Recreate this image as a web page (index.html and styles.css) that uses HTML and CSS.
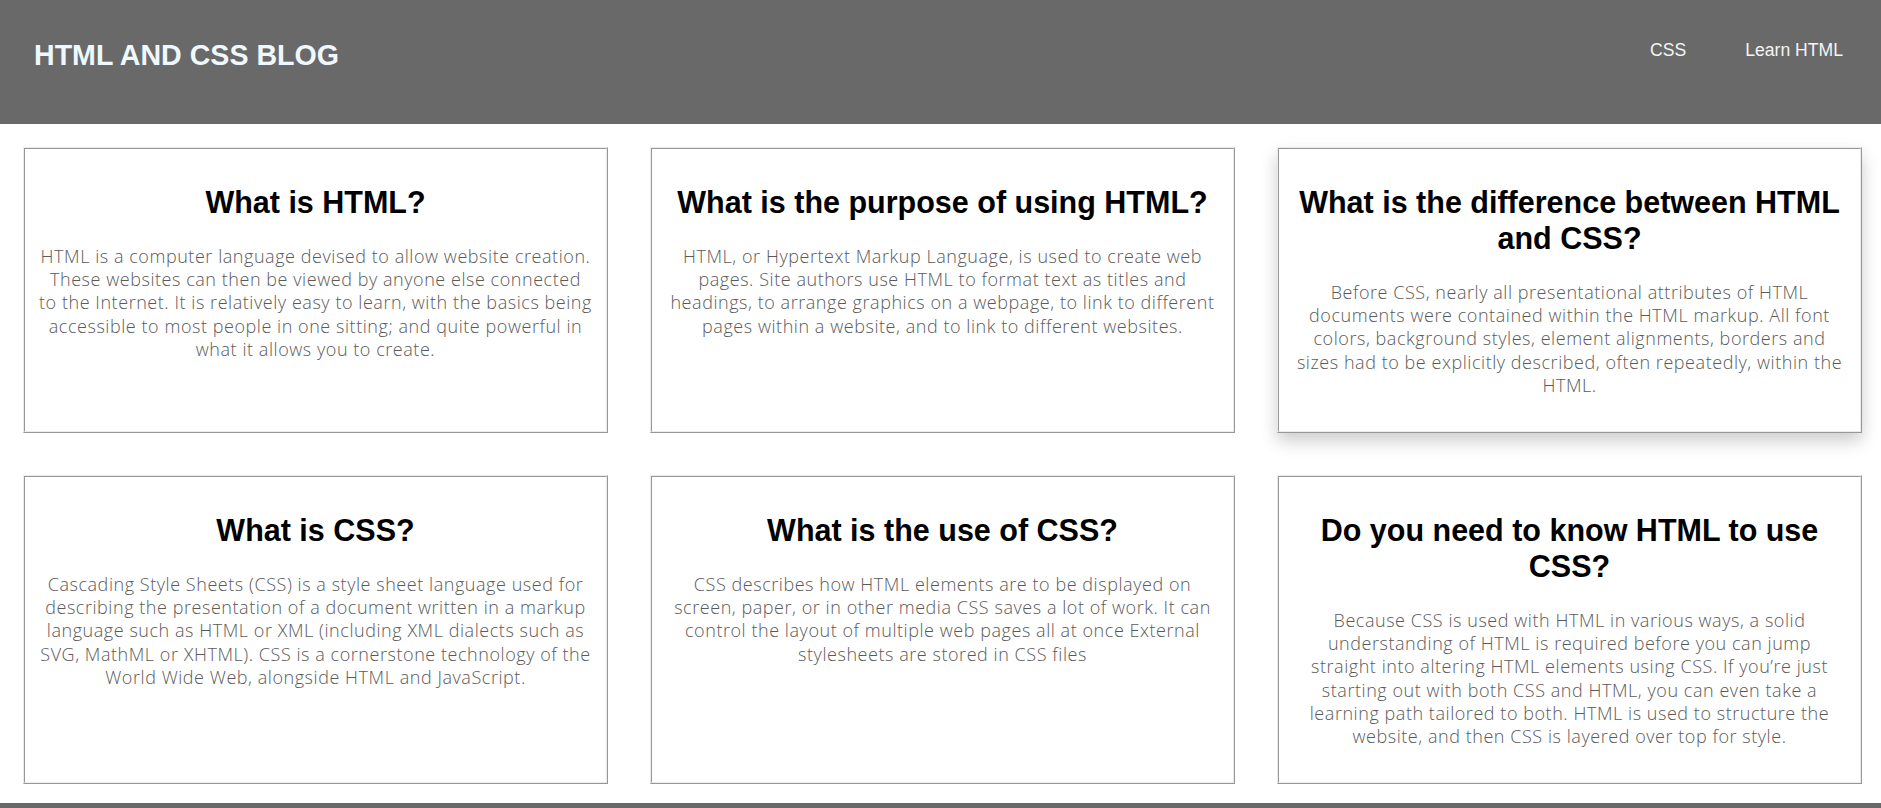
FILE: index.html
```html
<!DOCTYPE html>
<html lang="en">
<head>
<meta charset="utf-8">
<title>HTML and CSS Blog</title>
<link rel="stylesheet" href="styles.css">
</head>
<body>
<header class="site-header">
  <h1 class="brand">HTML AND CSS BLOG</h1>
  <nav class="nav">
    <a class="nav-link" href="#">CSS</a>
    <a class="nav-link" href="#">Learn HTML</a>
  </nav>
</header>
<main class="grid">
  <article class="card">
    <h2 class="card-title">What is HTML?</h2>
    <p class="card-text">HTML is a computer language devised to allow website creation.<br>These websites can then be viewed by anyone else connected<br>to the Internet. It is relatively easy to learn, with the basics being<br>accessible to most people in one sitting; and quite powerful in<br>what it allows you to create.</p>
  </article>
  <article class="card">
    <h2 class="card-title">What is the purpose of using HTML?</h2>
    <p class="card-text">HTML, or Hypertext Markup Language, is used to create web<br>pages. Site authors use HTML to format text as titles and<br>headings, to arrange graphics on a webpage, to link to different<br>pages within a website, and to link to different websites.</p>
  </article>
  <article class="card card-hover">
    <h2 class="card-title">What is the difference between HTML and CSS?</h2>
    <p class="card-text">Before CSS, nearly all presentational attributes of HTML<br>documents were contained within the HTML markup. All font<br>colors, background styles, element alignments, borders and<br>sizes had to be explicitly described, often repeatedly, within the<br>HTML.</p>
  </article>
  <article class="card">
    <h2 class="card-title">What is CSS?</h2>
    <p class="card-text">Cascading Style Sheets (CSS) is a style sheet language used for<br>describing the presentation of a document written in a markup<br>language such as HTML or XML (including XML dialects such as<br>SVG, MathML or XHTML). CSS is a cornerstone technology of the<br>World Wide Web, alongside HTML and JavaScript.</p>
  </article>
  <article class="card">
    <h2 class="card-title">What is the use of CSS?</h2>
    <p class="card-text">CSS describes how HTML elements are to be displayed on<br>screen, paper, or in other media CSS saves a lot of work. It can<br>control the layout of multiple web pages all at once External<br>stylesheets are stored in CSS files</p>
  </article>
  <article class="card">
    <h2 class="card-title">Do you need to know HTML to use CSS?</h2>
    <p class="card-text">Because CSS is used with HTML in various ways, a solid<br>understanding of HTML is required before you can jump<br>straight into altering HTML elements using CSS. If you’re just<br>starting out with both CSS and HTML, you can even take a<br>learning path tailored to both. HTML is used to structure the<br>website, and then CSS is layered over top for style.</p>
  </article>
</main>
<footer class="site-footer"></footer>
</body>
</html>
```

FILE: styles.css
```css
html, body {
  margin: 0;
  padding: 0;
  background: #ffffff;
}

body {
  font-family: "Liberation Sans", Arial, sans-serif;
}

.site-header {
  box-sizing: border-box;
  height: 124px;
  background: #696969;
  display: flex;
  justify-content: space-between;
  align-items: flex-start;
  padding: 39px 38px 0 34px;
}

.brand {
  margin: 0;
  font-family: "Liberation Sans", Arial, sans-serif;
  font-weight: 700;
  font-size: 28.6px;
  line-height: 33px;
  color: #f0f8ff;
}

.nav {
  display: flex;
  gap: 59px;
  padding-top: 1px;
}

.nav-link {
  font-family: "Liberation Sans", Arial, sans-serif;
  font-size: 17.6px;
  line-height: 20px;
  color: #f4f4f4;
  text-decoration: none;
}

.grid {
  display: grid;
  grid-template-columns: repeat(3, 1fr);
  column-gap: 42px;
  row-gap: 42px;
  padding: 0 19px 0 23px;
  margin: 23px 0 19px;
}

.card {
  border: 2px ridge #ebebeb;
  background: #ffffff;
  padding: 35px 5px 34px;
  text-align: center;
}

.card-hover {
  box-shadow: 0 8px 16px 0 rgba(0, 0, 0, 0.2);
}

.card-title {
  margin: 0 6px 25px;
  font-family: "Liberation Sans", Arial, sans-serif;
  font-weight: 700;
  font-size: 30.5px;
  line-height: 36px;
  color: #000000;
}

.card-text {
  margin: 0;
  font-family: "Open Sans", "Liberation Sans", sans-serif;
  font-weight: 300;
  font-size: 18px;
  letter-spacing: 0.55px;
  line-height: 23.2px;
  color: #5a5a5a;
}

.site-footer {
  height: 5px;
  background: #696969;
}
```
